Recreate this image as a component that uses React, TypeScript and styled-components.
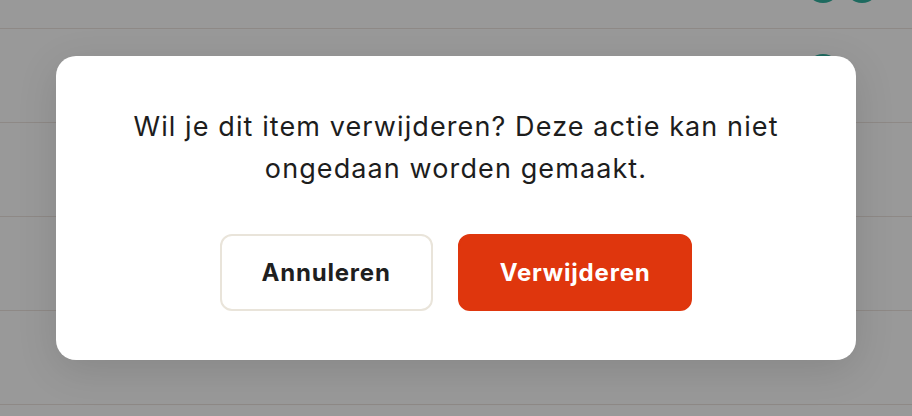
import React from 'react';
import styled, { createGlobalStyle } from 'styled-components';

const GlobalStyle = createGlobalStyle`
  html, body {
    margin: 0;
    padding: 0;
    width: 100%;
    height: 100%;
    overflow: hidden;
    background: #ffffff;
    font-family: Inter, 'Noto Sans', sans-serif;
  }
  #root {
    height: 100%;
  }
`;

const Page = styled.div`
  position: relative;
  width: 100%;
  height: 100%;
  overflow: hidden;
  background: #ffffff;
`;

const List = styled.div`
  display: flex;
  flex-direction: column;
  margin-top: -65px;
`;

const Row = styled.div`
  height: 93px;
  border-bottom: 1px solid #ede5df;
  display: flex;
  align-items: center;
  justify-content: flex-end;
  gap: 5px;
  padding: 0 33px;
`;

const RoundAction = styled.span<{ $offset: number }>`
  width: 34px;
  height: 34px;
  border-radius: 50%;
  background: #33b19f;
  transform: translateY(${(p) => p.$offset}px);
`;

const Spacer = styled.span`
  width: 34px;
`;

const Backdrop = styled.div`
  position: absolute;
  inset: 0;
  background: rgba(0, 0, 0, 0.4);
  display: flex;
  align-items: center;
  justify-content: center;
`;

const Dialog = styled.div`
  width: 800px;
  box-sizing: border-box;
  padding: 50px 60px 49px;
  background: #ffffff;
  border-radius: 20px;
  box-shadow: 0 10px 40px rgba(0, 0, 0, 0.12);
  display: flex;
  flex-direction: column;
  align-items: center;
  gap: 44px;
`;

const Message = styled.p`
  margin: 0;
  text-align: center;
  font-size: 27px;
  line-height: 42px;
  letter-spacing: 1.1px;
  color: #1d1d1d;
`;

const Actions = styled.div`
  display: flex;
  gap: 25px;
`;

const Button = styled.button<{ $danger?: boolean }>`
  height: 77px;
  box-sizing: border-box;
  padding: 0 40px;
  border-radius: 12px;
  font-family: Inter, 'Noto Sans', sans-serif;
  font-size: 24px;
  font-weight: 700;
  letter-spacing: 0.8px;
  cursor: pointer;
  border: 2px solid ${(p) => (p.$danger ? '#df360d' : '#e9e4da')};
  background: ${(p) => (p.$danger ? '#df360d' : '#ffffff')};
  color: ${(p) => (p.$danger ? '#ffffff' : '#1f1f1f')};
`;

const rows = [
  { actions: 2, offset: 4 },
  { actions: 1, offset: -5 },
  { actions: 0, offset: 0 },
  { actions: 0, offset: 0 },
  { actions: 0, offset: 0 },
];

export default function App() {
  return (
    <>
      <GlobalStyle />
      <Page>
        <List>
          {rows.map((row, i) => (
            <Row key={i}>
              {Array.from({ length: row.actions }).map((_, j) => (
                <RoundAction key={j} $offset={row.offset} />
              ))}
              {row.actions === 1 && <Spacer />}
            </Row>
          ))}
        </List>
        <Backdrop>
          <Dialog role="dialog">
            <Message>
              Wil je dit item verwijderen? Deze actie kan niet ongedaan worden gemaakt.
            </Message>
            <Actions>
              <Button>Annuleren</Button>
              <Button $danger>Verwijderen</Button>
            </Actions>
          </Dialog>
        </Backdrop>
      </Page>
    </>
  );
}
